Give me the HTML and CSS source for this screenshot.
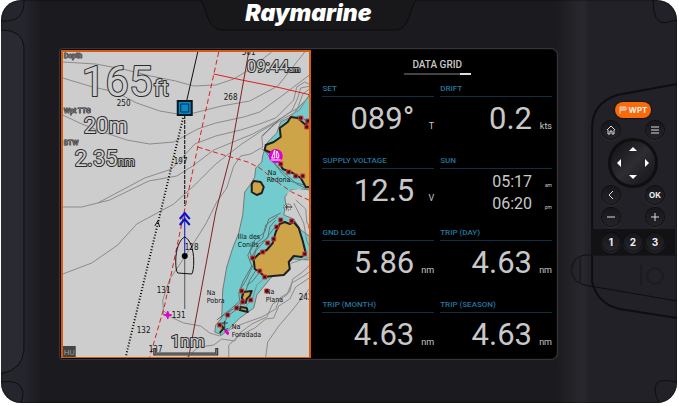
FILE: index.html
```html
<!DOCTYPE html>
<html lang="en">
  <head>
    <meta charset="UTF-8" />
    <meta name="viewport" content="width=device-width, initial-scale=1.0" />
    <title>Raymarine</title>
    <link rel="stylesheet" href="styles.css">
  </head>
  <body>
    <main class="device">
      <!-- housing seams -->
      <svg class="casing" viewBox="0 0 677 403" preserveAspectRatio="none" aria-hidden="true">
        <path class="tab" d="M200 0 C207 10 206 30 222 30 H394 C410 30 408 10 416 0" />
        <path class="side" d="M0 30 Q22 30 23 47 V150 V350 Q23 369 0 372Z" />
        <path class="seam" d="M0 21 Q24 23 23 0 M0 30 Q22 30 23 47 V350 Q22 369 0 374 M0 382 Q22 379 22 395 L20 403" />
        <path class="seam" d="M653 0 Q653 23 664 23 L677 20 M677 382 Q655 377 655 388 Q655 396 659 403" />
        <path class="groove" d="M677 84 L617 95 Q592 103 592 128 V282 Q598 307 626 310 L677 318" />
        <path class="seam" d="M677 255 H585 Q571 257 571 270 Q572 282 584 285 L677 301" />
        <path class="shade" d="M575 260 Q568 272 576 281 M580 256 V284" />
        <path class="shade" d="M641 265 V286" />
        <circle class="shade" cx="655" cy="276" r="8" />
        <circle class="dot" cx="655" cy="276" r="6" />
      </svg>

      <section class="front">
        <header class="brand"><h1>Raymarine</h1></header>

        <div class="screen">
          <div class="chart">
            <svg class="map" viewBox="63 52 247 305" preserveAspectRatio="xMidYMid slice">
              <!-- shallow water -->
              <path class="shallow" d="M311 91 L308 98 L299 107 L291 117 L281 122 L277 133 L268 142 L265 149 L263 156 L262 162 L256 168 L255 177 L251 184 L245 192 L244 203 L243 215 L239 233 L233 248 L227 267 L223 290 L222 318 L216 325 L215 332 L222 335 L229 329 L240 318 L254 308 L257 295 L271 278 L281 270 L293 259 L311 260 V237 L301 230 L294 219 L284 215 L286 204 L285 197 L291 190 L311 189Z" />
              <path class="land-bg" d="M288 199 Q284 190 299 189 L311 191 V228 L303 224 L297 216 L290 213 Z" />
              <path class="land-bg" d="M259 309 L263 296 L282 280 L296 265 L311 260 V310Z" />

              <!-- depth contours -->
              <g class="contour">
                <path d="M63 62 L96 64 L123 69 L151 76 L176 81 L194 86 L216 85 L234 79 L249 70 L272 52" />
                <path d="M63 78 L93 87 L116 92 L137 103 L160 111 L178 114 L194 113 L222 106 L250 101 L278 86 L305 52" />
                <path d="M63 115 L82 124 L103 132 L127 140 L150 144 L174 142 L198 129 L216 123 L244 117 L260 112 L282 96 L311 74" />
                <path d="M98 203 L145 178 L172 169 L195 144 L216 136 L241 130 L260 124 L276 118 L282 112 L294 100 L297 87 L305 82 L311 85" />
                <path d="M63 207 H82 L110 200 L149 181 L177 176 L193 166 L214 150 L231 143 L253 134 L277 121 L292 111 L298 98 L301 88 L311 86" />
                <path d="M63 274 L92 263 L118 245 L137 224 L161 211 L174 204 L196 184 L216 164 L242 144 L260 132 L275 123 L288 114 L298 108 L303 94 L311 88" />
                <path d="M164 315 L163 300 L170 279 L183 260 L194 243 L206 224 L217 202 L227 188 L234 166 L241 156 L251 154 L263 147 L262 137 L272 126 L285 118 L300 110 L308 97" />
                <path d="M163 310 L171 317 L184 323 L201 326 L210 333 L220 336 L233 328 L245 323 L262 317 L276 309 L280 298 L290 292 L293 279 L303 272 L311 264" />
                <path d="M187 357 L199 347 L214 345 L222 339 L235 341 L240 333 L252 324 L267 317 L273 304 L287 295 L292 283 L304 276 L311 271" />
                <path d="M229 357 V345 L239 336 L255 328 L266 319 L274 318 L279 306 L290 299 L296 287 L311 277" />
                <path d="M266 357 L268 342 L279 326 L291 312 L311 287" />
                <path d="M294 203 L304 223 L307 241 L311 249 M296 200 L306 209 L307 222 L311 229" />
                <path d="M244 309 L253 298 L257 285 L267 276 L281 272 L292 263 L310 257" />
              </g>

              <!-- reefs round the islets -->
              <g class="reef">
                <path d="M278 216 L266 225 L263 238 L254 245 L248 255 L252 266 L243 282 L239 293 L240 301 L231 309 L217 320" />
                <path d="M281 213 L269 219 L265 232 L255 240 L250 251 L254 264 L247 279 L241 289 L242 301 L235 308 L220 318" />
                <path d="M276 220 L270 227 L268 238 L259 244 L252 257 L257 269 L250 280 L246 291 L240 307 L228 316 L221 329" />
                <path d="M276 226 L264 242 L256 251 L254 258 L261 271 L252 282 L247 285 M309 127 L304 118 L297 116 M307 134 L302 121 M262 149 L270 154 L277 166 L288 176 L297 184 L311 191" />
                <path d="M262 136 L272 127 L280 119 M266 152 L272 160 L282 173 L290 181 L311 187" />
              </g>

              <!-- islands -->
              <path class="land" d="M311 119 L306 125 L298 118 L291 117 L288 122 L280 128 L281 137 L274 142 L266 145 L265 150 L272 153 L277 158 L283 169 L293 173 L301 178 L306 187 L311 187Z" />
              <path class="land" d="M252 184 L254 181 L261 182 L264 187 L262 193 L257 195 L252 192Z" />
              <path class="land" d="M280 224 L285 222 L290 224 L294 222 L299 228 L303 241 L306 253 L302 257 L294 256 L289 262 L290 269 L284 275 L273 276 L265 277 L260 272 L255 269 L254 259 L259 254 L267 250 L273 243 L276 232Z" />
              <path class="land" d="M244 292 L252 291 L250 296 L247 299 L246 303 L242 298Z M241 307 L247 308 L248 312 L240 310Z M220 324 L224 328 L220 333" />

              <!-- rocks -->
              <path class="rock" d="M279 218h4v4h-4z M290 219h4v4h-4z M275 225h4v4h-4z M272 237h4v4h-4z M266 241h4v4h-4z M261 250h4v4h-4z M251 256h4v4h-4z M258 269h4v4h-4z M263 275h4v4h-4z M303 252h4v4h-4z M240 289h4v4h-4z M265 289h4v4h-4z M249 298h4v4h-4z M241 300h4v4h-4z M235 306h4v4h-4z M226 313h4v4h-4z M218 323h4v4h-4z M299 116h4v4h-4z M306 119h4v4h-4z M305 125h4v4h-4z M279 162h4v4h-4z M287 170h4v4h-4z M294 174h4v4h-4z M301 174h4v4h-4z" />
              <ellipse class="wreck" cx="288" cy="207" rx="4" ry="3" />
              <path class="thin" d="M285 207h7 M287 205v4" />

              <!-- boundaries -->
              <path class="bound dash" d="M219 52 L198 147 L165 305 L150 357" />
              <path class="bound" d="M214 74 L242 80 L277 87 L311 95" />
              <path class="bound dash" d="M198 147 L224 155 L248 162 L260 168 L276 181 L292 192 L311 201" />
              <path class="bound" d="M311 217 L309 228 L311 229" />
              <path class="transit" d="M249 52 L230 158 L216 212 L189 357" />

              <!-- soundings and place names -->
              <g class="sounding">
                <text x="117" y="106">250</text>
                <text x="242" y="55">301</text>
                <text x="224" y="100">268</text>
                <text x="174" y="164">197</text>
                <text x="185" y="250">128</text>
                <text x="157" y="293">131</text>
                <text x="172" y="318">131</text>
                <text x="137" y="333">132</text>
                <text x="149" y="352">137</text>
                <text x="299" y="300">242</text>
              </g>
              <g class="place">
                <text x="268" y="175">Na</text>
                <text x="267" y="182">Redona</text>
                <text x="238" y="239">Illa des</text>
                <text x="238" y="247">Conills</text>
                <text x="207" y="295">Na</text>
                <text x="207" y="303">Pobra</text>
                <text x="266" y="294">Na</text>
                <text x="266" y="302">Plana</text>
                <text x="232" y="329">Na</text>
                <text x="232" y="337">Foradada</text>
              </g>

              <!-- marks -->
              <circle class="marina" cx="276" cy="156" r="7" />
              <path class="marina-sail" d="M275 150 V158 H272 Z M277 151 Q280 154 279 158 H277Z M271 160 H281" />
              <path class="magenta" d="M168 311 L169 314 L172 315 L169 316 L168 319 L167 316 L164 315 L167 314Z M225 331 L227 330 L229 333 L228 335Z" />
              <path class="thin" d="M225 321v9 M222 323h6 M222 328q3 4 6 0" />

              <!-- route and own ship -->
              <path class="course" d="M198 52 L186 105" />
              <path class="track" d="M184 115 L163 203 L126 357" />
              <path class="ink" d="M155 226 L158 221 L160 227" />
              <path class="bearing" d="M185 115 V206" />
              <path class="stern" d="M185 256 V309" />
              <path class="heading" d="M185 255 V215" />
              <path class="chevron" d="M180 219 L185 213 L190 219 M180 225 L185 219 L190 225" />
              <path class="hull" d="M178 273 Q176 271 176 261 C176 249 180 239 185 237 C190 239 194 249 194 261 Q194 271 192 274 Z" />
              <circle cx="185" cy="256" r="3" />
              <path class="waypoint" d="M178 101 H192 V115 H178Z" />
              <path class="waypoint-inner" d="M181 104 H189 V112 H181Z" />

              <!-- overlay readouts -->
              <g class="readout">
                <text class="tag" x="64" y="58">Depth</text>
                <text class="xl" x="82" y="96">165</text>
                <text class="lg" x="154" y="96">ft</text>
                <text class="tag" x="64" y="113">Wpt TTG</text>
                <text class="lg" x="84" y="133">20m</text>
                <text class="tag" x="64" y="145">BTW</text>
                <text class="lg" x="75" y="166">2.35</text>
                <text class="sm" x="118" y="166">nm</text>
                <text class="md" x="247" y="72">09:44</text>
                <text class="xs" x="289" y="72">am</text>
                <text class="md" x="171" y="347">1nm</text>
              </g>
              <path class="scale-edge" d="M155 348 V354 H217 V348" />
              <path class="scale" d="M155 349 V354 H217 V349" />
              <path class="mode" d="M63 346 H76 V357 H63Z" />
              <text class="mode-text" x="64" y="355">HU</text>
            </svg>
          </div>

          <section class="data">
            <h2 class="data-title">DATA GRID</h2>
            <div class="data-grid">
              <article class="cell">
                <h3>SET</h3>
                <p><span class="value">089°</span><span class="unit">T</span></p>
              </article>
              <article class="cell">
                <h3>DRIFT</h3>
                <p><span class="value">0.2</span><span class="unit">kts</span></p>
              </article>
              <article class="cell">
                <h3>SUPPLY VOLTAGE</h3>
                <p><span class="value">12.5</span><span class="unit">V</span></p>
              </article>
              <article class="cell sun">
                <h3>SUN</h3>
                <p><span class="value">05:17</span><span class="unit">am</span></p>
                <p><span class="value">06:20</span><span class="unit">pm</span></p>
              </article>
              <article class="cell">
                <h3>GND LOG</h3>
                <p><span class="value">5.86</span><span class="unit">nm</span></p>
              </article>
              <article class="cell">
                <h3>TRIP (DAY)</h3>
                <p><span class="value">4.63</span><span class="unit">nm</span></p>
              </article>
              <article class="cell">
                <h3>TRIP (MONTH)</h3>
                <p><span class="value">4.63</span><span class="unit">nm</span></p>
              </article>
              <article class="cell">
                <h3>TRIP (SEASON)</h3>
                <p><span class="value">4.63</span><span class="unit">nm</span></p>
              </article>
            </div>
          </section>
        </div>
      </section>

      <aside class="keypad">
        <button class="wpt" type="button">
          <svg viewBox="0 0 8 8" aria-hidden="true"><path d="M1 8 V1 H7 V4 H1 M3 1v3 M5 1v3" /></svg>WPT
        </button>
        <div class="keys">
          <button class="key" type="button" aria-label="Home">
            <svg viewBox="0 0 18 18"><path d="M5 9 L9 5 L13 9 M6 9 V13 H8 V10 H10 V13 H12 V9" /></svg>
          </button>
          <button class="key right" type="button" aria-label="Menu">
            <svg viewBox="0 0 18 18"><path d="M5 6h8 M5 9h8 M5 12h8" /></svg>
          </button>
        </div>
        <div class="dpad">
          <button class="up" type="button" aria-label="Up"><svg viewBox="0 0 8 8"><path d="M0 6 L4 2 L8 6Z" /></svg></button>
          <button class="left" type="button" aria-label="Left"><svg viewBox="0 0 8 8"><path d="M6 0 L2 4 L6 8Z" /></svg></button>
          <button class="next" type="button" aria-label="Right"><svg viewBox="0 0 8 8"><path d="M2 0 L6 4 L2 8Z" /></svg></button>
          <button class="down" type="button" aria-label="Down"><svg viewBox="0 0 8 8"><path d="M0 2 L4 6 L8 2Z" /></svg></button>
        </div>
        <div class="keys">
          <button class="key" type="button" aria-label="Back">
            <svg viewBox="0 0 18 18"><path d="M11 5 L7 9 L11 13" /></svg>
          </button>
          <button class="key right" type="button">OK</button>
          <button class="key" type="button" aria-label="Zoom out">
            <svg viewBox="0 0 18 18"><path d="M5 9h8" /></svg>
          </button>
          <button class="key right" type="button" aria-label="Zoom in">
            <svg viewBox="0 0 18 18"><path d="M5 9h8 M9 5v8" /></svg>
          </button>
        </div>
        <div class="keys favourites">
          <button class="key num" type="button">1</button>
          <button class="key num" type="button">2</button>
          <button class="key num" type="button">3</button>
        </div>
      </aside>
    </main>
  </body>
</html>
```
FILE: styles.css
```css
:root {
  --seam: #0e0e11;
  --accent: #d85a0c;
  --label: #24769f;
  --value: #c8c8c8;
}

* {
  box-sizing: border-box;
}

body {
  margin: 0;
  padding: 0 2px 3px 1px;
  background: #fff;
  font-family: Roboto, "Liberation Sans", sans-serif;
}

h1,
h2,
h3,
p {
  margin: 0;
}

/* housing */
.device {
  position: relative;
  display: grid;
  grid-template-columns: 1fr 98px;
  min-height: calc(100vh - 3px);
  overflow: hidden;
  border-radius: 20px;
  background: linear-gradient(90deg, #25262d 0, #25262d 23px, #202127 30px, #1b1b1f 40px, #1b1a1e 82%, #222126 84%, #29282e 86%, #222127 87%);
  box-shadow: inset 0 0 2px #050506;
}
.casing {
  position: absolute;
  inset: 0;
  width: 100%;
  height: 100%;
  fill: none;
}
.tab {
  fill: #18181b;
  stroke: #0c0c0e;
}
.side {
  fill: #292a32;
}
.seam {
  stroke: var(--seam);
}
.groove {
  stroke: var(--seam);
  stroke-width: 2;
}
.shade {
  stroke: #1c1c20;
  stroke-width: 2;
}
.dot {
  fill: #232228;
}

.front {
  position: relative;
  display: flex;
  flex-direction: column;
  padding: 0 23px 45px 60px;
}
.brand {
  height: 50px;
  text-align: center;
}
.brand h1 {
  color: #fff;
  font: italic 900 23px/26px Inter, "Liberation Sans", sans-serif;
}
.screen {
  flex: 1;
  display: grid;
  grid-template-columns: 251fr 245fr;
  background: #000;
  border-radius: 2px 5px 5px 2px;
  box-shadow: 0 0 0 1px #0a0a0c, 0 0 1px 2px #38383c;
}

/* chart */
.chart {
  position: relative;
  border: 2px solid var(--accent);
  border-bottom-width: 1px;
  background: #cdcdcd;
}
.map {
  position: absolute;
  inset: 0;
  width: 100%;
  height: 100%;
}
.shallow {
  fill: #72cccd;
  stroke: #777;
}
.land-bg {
  fill: #cdcdcd;
}
.contour {
  fill: none;
  stroke: #8b8b8b;
}
.reef {
  fill: none;
  stroke: #637477;
}
.land {
  fill: #cda448;
  stroke: #202020;
  stroke-width: 2;
  stroke-linejoin: round;
}
.rock {
  fill: #401414;
  stroke: #dc3c3c;
}
.wreck {
  fill: #cdcdcd;
  stroke: #333;
  stroke-dasharray: 1 1;
}
.thin {
  fill: none;
  stroke: #333;
}
.bound {
  fill: none;
  stroke: #dc2020;
}
.dash {
  stroke-dasharray: 5 3;
}
.transit {
  fill: none;
  stroke: #7c2426;
}
.sounding,
.place {
  fill: #111;
  font: 8px "DejaVu Sans Condensed", "DejaVu Sans", sans-serif;
}
.place {
  font-size: 7px;
}
.marina {
  fill: #e000d0;
}
.marina-sail {
  fill: none;
  stroke: #fff;
}
.magenta {
  fill: #e000d0;
  stroke: #e000d0;
}
.course,
.ink {
  fill: none;
  stroke: #111;
}
.track {
  fill: none;
  stroke: #000;
  stroke-width: 2;
  stroke-dasharray: 1 2;
}
.bearing {
  stroke: #000;
  stroke-dasharray: 4 1;
}
.stern {
  stroke: #555;
}
.heading,
.chevron {
  fill: none;
  stroke: #0a10c8;
}
.chevron {
  stroke-width: 2;
}
.hull {
  fill: none;
  stroke: #111;
}
.waypoint {
  fill: #0a88c8;
  stroke: #0a1820;
  stroke-width: 2;
}
.waypoint-inner {
  fill: none;
  stroke: #0a2c44;
}
.readout {
  fill: #cdcdcd;
  stroke: #2b2b2b;
  stroke-width: 2;
  stroke-linejoin: round;
  paint-order: stroke;
}
.readout .tag {
  fill: #8b8b8b;
  font-size: 7px;
  stroke-width: 1;
}
.xl {
  font-size: 42px;
}
.lg {
  font-size: 22px;
}
.md {
  font-size: 17px;
}
.sm {
  font-size: 12px;
}
.xs {
  font-size: 8px;
}
.scale-edge {
  fill: none;
  stroke: #333;
  stroke-width: 3;
}
.scale {
  fill: none;
  stroke: #888;
}
.mode {
  fill: #444;
}
.mode-text {
  fill: #999;
  font-size: 8px;
}

/* data page */
.data {
  display: flex;
  flex-direction: column;
  padding: 7px 4px 0 11px;
  color: var(--value);
}
.data-title {
  align-self: center;
  width: 67px;
  margin-bottom: 8px;
  padding-bottom: 1px;
  border-bottom: 2px solid;
  border-image: linear-gradient(90deg, #444 82%, #ddd 82%) 1;
  font-size: 10px;
  font-weight: 500;
  line-height: 15px;
  text-align: center;
}
.data-grid {
  flex: 1;
  display: grid;
  grid-template-columns: 1fr 1fr;
  grid-template-rows: repeat(3, 72px) auto;
  column-gap: 6px;
}
.cell h3 {
  height: 14px;
  margin-bottom: 2px;
  border-bottom: 1px solid #0c3042;
  color: var(--label);
  font-size: 8px;
  font-weight: 500;
  line-height: 11px;
}
.cell p {
  display: flex;
  align-items: baseline;
  justify-content: flex-end;
}
.value {
  font-size: 31px;
  line-height: 40px;
}
.unit {
  width: 20px;
  font-size: 9px;
  text-align: right;
}
.sun .value {
  font-size: 16px;
  line-height: 22px;
}
.sun .unit {
  font-size: 5px;
}

/* keypad */
.keypad {
  position: relative;
  display: flex;
  flex-direction: column;
  align-items: center;
  padding: 102px 2px 0 12px;
}
.keypad button {
  display: flex;
  align-items: center;
  justify-content: center;
  padding: 0;
  border: 0;
  color: #eee;
  font-family: Inter, sans-serif;
  font-weight: 700;
}
.keypad svg {
  fill: none;
  stroke: #ddd;
}
.keypad .wpt {
  gap: 2px;
  width: 36px;
  height: 16px;
  margin-bottom: 3px;
  border-radius: 8px;
  background: #fb6a08;
  box-shadow: 0 0 1px 1px #151518;
  font-size: 8px;
}
.wpt svg {
  width: 8px;
  height: 8px;
}
.keys {
  display: grid;
  grid-template-columns: repeat(3, 22px);
  row-gap: 4px;
  justify-items: center;
}
.keypad .key {
  width: 18px;
  height: 18px;
  border-radius: 50%;
  background: linear-gradient(#17171b, #232329);
  box-shadow: 0 0 0 1px #0d0d10, 0 1px 1px 1px #303036;
  font-size: 8px;
}
.key svg {
  width: 18px;
  height: 18px;
}
.key.right {
  grid-column: 3;
}
.keypad .num {
  font-size: 10px;
}
.dpad {
  display: grid;
  grid-template-columns: repeat(3, 14px);
  grid-template-rows: repeat(3, 14px);
  place-content: center;
  width: 50px;
  height: 50px;
  margin: -1px 0 -2px;
  border: 3px solid #0f0f12;
  border-radius: 50%;
  background: linear-gradient(135deg, #101013, #2d2d32 50%, #131316);
}
.dpad button {
  background: none;
}
.dpad svg {
  width: 8px;
  height: 8px;
  fill: #fff;
  stroke: none;
}
.up {
  grid-area: 1 / 2;
}
.left {
  grid-area: 2 / 1;
}
.next {
  grid-area: 2 / 3;
}
.down {
  grid-area: 3 / 2;
}
.favourites {
  align-self: stretch;
  justify-content: center;
  margin-top: 3px;
  padding: 4px 0;
  background: #121214;
}
```
